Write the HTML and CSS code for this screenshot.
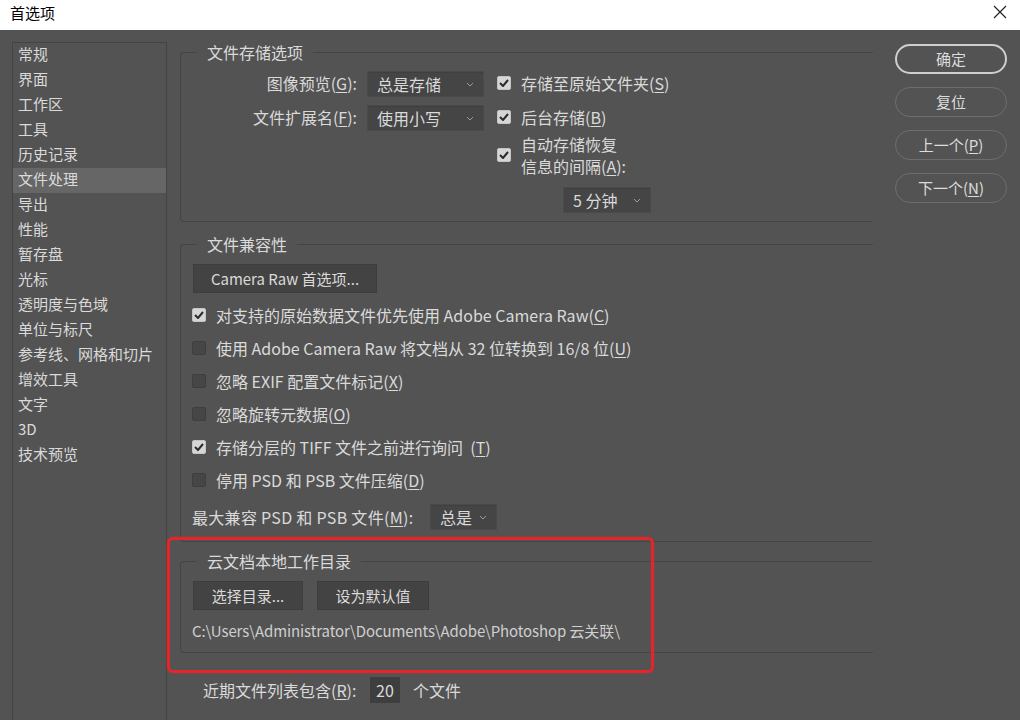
FILE: index.html
```html
<!DOCTYPE html>
<html lang="zh-CN">

<head>
    <meta charset="UTF-8">
    <title>首选项</title>
    <link rel="stylesheet" href="styles.css">
</head>

<body>
    <div class="titlebar">
        <span class="title">首选项</span>
        <svg class="close" width="14" height="14" viewBox="0 0 14 14">
            <path d="M1 1 L13 13 M13 1 L1 13" stroke="#222" stroke-width="1.2" fill="none" />
        </svg>
    </div>

    <div class="window">
        <ul class="nav">
            <li>常规</li>
            <li>界面</li>
            <li>工作区</li>
            <li>工具</li>
            <li>历史记录</li>
            <li class="active">文件处理</li>
            <li>导出</li>
            <li>性能</li>
            <li>暂存盘</li>
            <li>光标</li>
            <li>透明度与色域</li>
            <li>单位与标尺</li>
            <li>参考线、网格和切片</li>
            <li>增效工具</li>
            <li>文字</li>
            <li>3D</li>
            <li>技术预览</li>
        </ul>

        <div class="main">
            <fieldset class="group save">
                <legend>文件存储选项</legend>
                <div class="row first">
                    <span class="field-label">图像预览(<u>G</u>):</span>
                    <div class="select wide">总是存储<svg class="chev" width="8" height="5" viewBox="0 0 8 5"><path d="M1 1 L4 4 L7 1" stroke="#9a9a9a" fill="none" /></svg></div>
                    <div class="check on"><span class="box"><svg width="10" height="8" viewBox="0 0 10 8"><path d="M1 4 L4 7 L9 1" stroke="#2b2b2b" stroke-width="2" fill="none" /></svg></span>存储至原始文件夹(<u>S</u>)</div>
                </div>
                <div class="row second">
                    <span class="field-label">文件扩展名(<u>F</u>):</span>
                    <div class="select wide">使用小写<svg class="chev" width="8" height="5" viewBox="0 0 8 5"><path d="M1 1 L4 4 L7 1" stroke="#9a9a9a" fill="none" /></svg></div>
                    <div class="check on"><span class="box"><svg width="10" height="8" viewBox="0 0 10 8"><path d="M1 4 L4 7 L9 1" stroke="#2b2b2b" stroke-width="2" fill="none" /></svg></span>后台存储(<u>B</u>)</div>
                </div>
                <div class="row third">
                    <div class="check on two-line"><span class="box"><svg width="10" height="8" viewBox="0 0 10 8"><path d="M1 4 L4 7 L9 1" stroke="#2b2b2b" stroke-width="2" fill="none" /></svg></span><span>自动存储恢复<br>信息的间隔(<u>A</u>):</span></div>
                </div>
                <div class="row fourth">
                    <div class="select minutes">5 分钟<svg class="chev" width="8" height="5" viewBox="0 0 8 5"><path d="M1 1 L4 4 L7 1" stroke="#9a9a9a" fill="none" /></svg></div>
                </div>
            </fieldset>

            <fieldset class="group compat">
                <legend>文件兼容性</legend>
                <button class="flat raw-btn">Camera Raw 首选项...</button>
                <div class="check-list">
                    <div class="check on"><span class="box"><svg width="10" height="8" viewBox="0 0 10 8"><path d="M1 4 L4 7 L9 1" stroke="#2b2b2b" stroke-width="2" fill="none" /></svg></span>对支持的原始数据文件优先使用 Adobe Camera Raw(<u>C</u>)</div>
                    <div class="check"><span class="box"></span>使用 Adobe Camera Raw 将文档从 32 位转换到 16/8 位(<u>U</u>)</div>
                    <div class="check"><span class="box"></span>忽略 EXIF 配置文件标记(<u>X</u>)</div>
                    <div class="check"><span class="box"></span>忽略旋转元数据(<u>O</u>)</div>
                    <div class="check on"><span class="box"><svg width="10" height="8" viewBox="0 0 10 8"><path d="M1 4 L4 7 L9 1" stroke="#2b2b2b" stroke-width="2" fill="none" /></svg></span>存储分层的 TIFF 文件之前进行询问 &nbsp;(<u>T</u>)</div>
                    <div class="check"><span class="box"></span>停用 PSD 和 PSB 文件压缩(<u>D</u>)</div>
                </div>
                <div class="row max-row">
                    <span class="max-label">最大兼容 PSD 和 PSB 文件(<u>M</u>):</span>
                    <div class="select short">总是<svg class="chev" width="8" height="5" viewBox="0 0 8 5"><path d="M1 1 L4 4 L7 1" stroke="#9a9a9a" fill="none" /></svg></div>
                </div>
            </fieldset>

            <fieldset class="group cloud">
                <legend>云文档本地工作目录</legend>
                <div class="btn-row">
                    <button class="flat dir-btn">选择目录...</button>
                    <button class="flat default-btn">设为默认值</button>
                </div>
                <div class="path">C:\Users\Administrator\Documents\Adobe\Photoshop 云关联\</div>
            </fieldset>

            <div class="row recent">
                <span class="recent-label">近期文件列表包含(<u>R</u>):</span>
                <div class="num">20</div>
                <span>个文件</span>
            </div>
        </div>

        <div class="actions">
            <button class="pill primary">确定</button>
            <button class="pill">复位</button>
            <button class="pill">上一个(<u>P</u>)</button>
            <button class="pill">下一个(<u>N</u>)</button>
        </div>
    </div>

    <div class="highlight"></div>
</body>

</html>
```

FILE: styles.css
```css
* {
    box-sizing: border-box;
}

body {
    margin: 0;
    width: 1020px;
    height: 720px;
    overflow: hidden;
    position: relative;
    background-color: #535353;
    font-family: "Noto Sans CJK SC", "Microsoft YaHei", sans-serif;
    color: #dadada;
}

u {
    text-underline-offset: 2px;
}

.titlebar {
    height: 30px;
    background-color: #fff;
    display: flex;
    align-items: center;
    justify-content: space-between;
    padding: 0 13px 6px 10px;
    color: #000;
    font-size: 15px;
}

.window {
    display: flex;
    padding-top: 12px;
}

.nav {
    list-style: none;
    margin: 0 0 0 12px;
    padding: 0;
    width: 155px;
    height: 700px;
    border: 1px solid #444;
    border-bottom: none;
    font-size: 15px;
}

.nav li {
    height: 25px;
    line-height: 21px;
    padding-left: 5px;
    white-space: nowrap;
}

.nav li.active {
    background-color: #666;
}

.main {
    margin-left: 13px;
    width: 693px;
    font-size: 16px;
}

.group {
    margin: 0;
    padding: 0;
    min-width: 0;
    border: 1px solid #454545;
    border-right: none;
    border-radius: 4px 0 0 4px;
}

.group legend {
    margin-left: 16px;
    padding: 0 10px;
    line-height: 20px;
    font-size: 16px;
}

.row {
    display: flex;
    align-items: center;
}

.save .first {
    margin-top: 9px;
    height: 26px;
}

.save .second {
    margin-top: 8px;
    height: 26px;
}

.save .third {
    margin-top: 3px;
    height: 44px;
    padding-left: 316px;
}

.save .fourth {
    margin-top: 9px;
    height: 26px;
    padding-left: 382px;
}

.save {
    padding-bottom: 8px;
}

.field-label {
    width: 176px;
    margin-right: 10px;
    text-align: right;
    margin-top: -2px;
}

.select {
    height: 26px;
    display: flex;
    align-items: center;
    justify-content: space-between;
    padding: 0 9px;
    background-color: #454545;
    border: 1px solid #4a4a4a;
    box-shadow: inset 0 1px 0 #3f3f3f;
}

.select.wide {
    width: 117px;
    margin-right: 13px;
}

.select.minutes {
    width: 88px;
}

.select.short {
    width: 67px;
}

.chev {
    flex-shrink: 0;
}

.check {
    display: flex;
    align-items: center;
    white-space: nowrap;
}

.check .box {
    width: 14px;
    height: 14px;
    margin-right: 10px;
    border-radius: 2px;
    background-color: #464646;
    border: 1px solid #3e3e3e;
    display: flex;
    align-items: center;
    justify-content: center;
    flex-shrink: 0;
}

.check.on .box {
    background-color: #d6d6d6;
    border-color: #c4c4c4;
}

.check.two-line {
    line-height: 22px;
}

.save .check {
    margin-top: -3px;
}

.flat {
    font-family: inherit;
    font-size: 15px;
    color: #dadada;
    background-color: #434343;
    border: 1px solid #3d3d3d;
    height: 29px;
    padding: 0;
}

.raw-btn {
    margin: 10px 0 0 12px;
    width: 184px;
}

.check-list {
    margin-top: 5px;
    padding-left: 11px;
}

.check-list .check {
    height: 33px;
}

.max-row {
    margin-top: 8px;
    height: 26px;
    padding-left: 11px;
}

.compat {
    margin-top: 12px;
    padding-bottom: 11px;
}

.max-label {
    width: 238px;
    letter-spacing: 0.3px;
}

.cloud {
    margin-top: 9px;
    padding-bottom: 11px;
}

.btn-row {
    display: flex;
    gap: 14px;
    margin: 10px 0 0 12px;
}

.dir-btn {
    width: 110px;
}

.default-btn {
    width: 112px;
}

.path {
    margin: 11px 0 0 11px;
    line-height: 20px;
    font-size: 15px;
    color: #cfcfcf;
    white-space: nowrap;
    letter-spacing: -0.1px;
}

.recent {
    margin-top: 24px;
    height: 26px;
    padding-left: 23px;
}

.recent-label {
    width: 167px;
}

.num {
    width: 30px;
    height: 26px;
    line-height: 26px;
    text-align: center;
    background-color: #3e3e3e;
    margin-right: 13px;
}

.actions {
    margin-left: 22px;
    padding-top: 2px;
    width: 112px;
    display: flex;
    flex-direction: column;
    gap: 13px;
}

.pill {
    height: 30px;
    border-radius: 15px;
    background-color: transparent;
    border: 1px solid #6e6e6e;
    color: #dcdcdc;
    font-family: inherit;
    font-size: 15px;
    padding: 0 0 2px;
}

.pill.primary {
    border: 2px solid #cfcfcf;
}

.highlight {
    position: absolute;
    left: 167px;
    top: 537px;
    width: 487px;
    height: 136px;
    border: 3px solid #e3262b;
    border-radius: 6px;
    box-shadow: 0 0 2px rgba(227, 38, 43, 0.6);
}
```
